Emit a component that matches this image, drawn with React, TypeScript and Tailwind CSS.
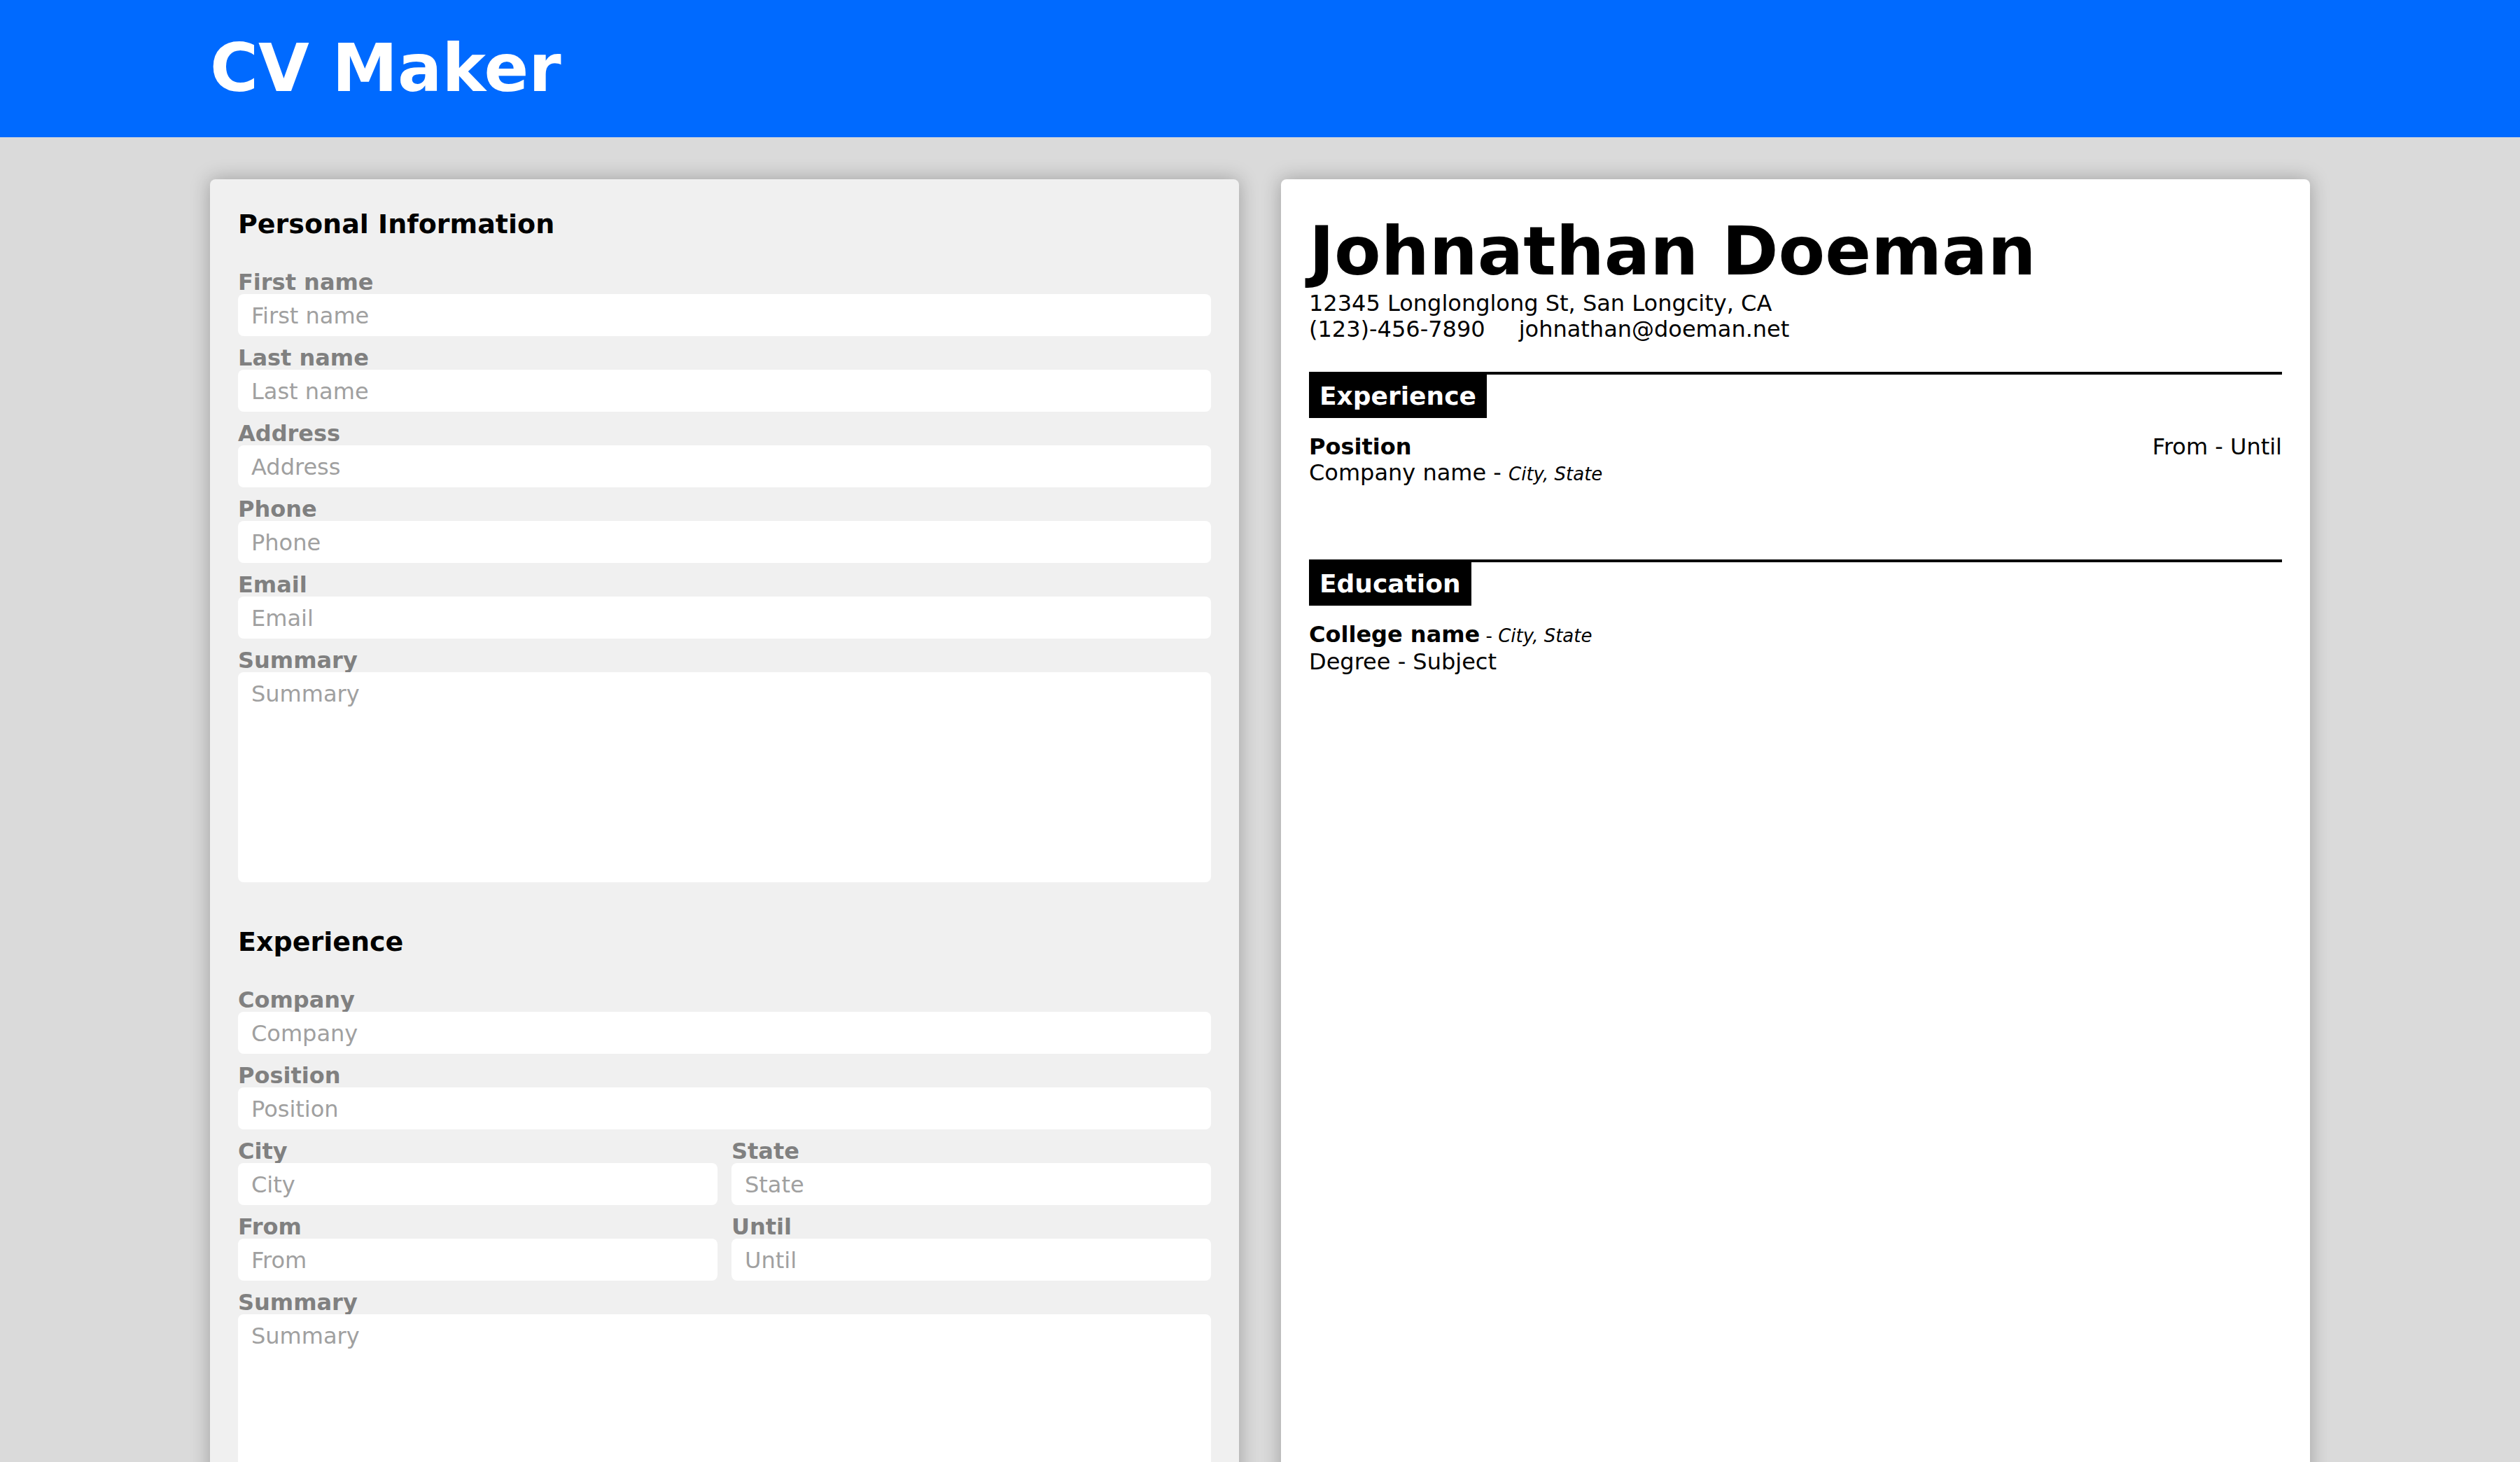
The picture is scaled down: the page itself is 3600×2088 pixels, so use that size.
import React from 'react';

type FieldProps = {
  label: string;
  textarea?: boolean;
};

const Field: React.FC<FieldProps> = ({ label, textarea }) => (
  <label className="flex flex-col">
    <span className="-mt-[2px] -mb-[2px] text-[32px] leading-[37px] font-bold text-[#808080]">{label}</span>
    {textarea ? (
      <textarea
        placeholder={label}
        className="h-[300px] resize-none rounded-lg bg-white px-[19px] pt-[13px] text-[32px] leading-[37px] text-black outline-none placeholder:text-[#a0a0a0]"
      />
    ) : (
      <input
        placeholder={label}
        className="h-[60px] rounded-lg bg-white px-[19px] pt-[2px] text-[32px] text-black outline-none placeholder:text-[#a0a0a0]"
      />
    )}
  </label>
);

const FormSection: React.FC<{ title: string; children: React.ReactNode }> = ({ title, children }) => (
  <section className="flex flex-col">
    <h2 className="mb-[44px] text-[38px] leading-[45px] font-bold text-black">{title}</h2>
    <div className="flex flex-col gap-[15px]">{children}</div>
  </section>
);

const CvHeading: React.FC<{ title: string }> = ({ title }) => (
  <div className="flex border-t-4 border-black">
    <div className="bg-black px-[15px] py-[10px] text-[36px] leading-[42px] font-bold text-white">{title}</div>
  </div>
);

const App: React.FC = () => {
  return (
    <div className="min-h-screen bg-[#dadada] font-['DejaVu_Sans',Verdana,sans-serif] text-black">
      {/* Header */}
      <header className="h-[196px] bg-[#006aff]">
        <div className="mx-auto flex h-full w-[3000px] items-center">
          <h1 className="text-[94px] leading-none font-bold text-white">CV Maker</h1>
        </div>
      </header>

      <main className="mx-auto grid w-[3000px] grid-cols-2 gap-[60px] pt-[60px] pb-[60px]">
        {/* Editor */}
        <div className="flex flex-col gap-[63px] rounded-lg bg-[#f0f0f0] px-[40px] pt-[42px] pb-[60px] shadow-[0_0_28px_rgba(0,0,0,0.28)]">
          <FormSection title="Personal Information">
            <Field label="First name" />
            <Field label="Last name" />
            <Field label="Address" />
            <Field label="Phone" />
            <Field label="Email" />
            <Field label="Summary" textarea />
          </FormSection>

          <FormSection title="Experience">
            <Field label="Company" />
            <Field label="Position" />
            <div className="grid grid-cols-2 gap-x-[20px]">
              <Field label="City" />
              <Field label="State" />
            </div>
            <div className="grid grid-cols-2 gap-x-[20px]">
              <Field label="From" />
              <Field label="Until" />
            </div>
            <Field label="Summary" textarea />
          </FormSection>

          <FormSection title="Education">
            <Field label="College" />
            <div className="grid grid-cols-2 gap-x-[20px]">
              <Field label="City" />
              <Field label="State" />
            </div>
            <Field label="Degree" />
            <Field label="Subject" />
          </FormSection>
        </div>

        {/* Preview */}
        <div className="rounded-lg bg-white px-[40px] pt-[46px] pb-[60px] shadow-[0_0_28px_rgba(0,0,0,0.28)]">
          <h1 className="text-[97px] leading-[113px] font-bold">Johnathan Doeman</h1>
          <div className="text-[32px] leading-[37px]">
            <p>12345 Longlonglong St, San Longcity, CA</p>
            <p>
              <span className="mr-[48px]">(123)-456-7890</span>
              <span>johnathan@doeman.net</span>
            </p>
          </div>

          <section className="mt-[42px]">
            <CvHeading title="Experience" />
            <div className="mt-[23px] text-[32px] leading-[37px]">
              <div className="flex justify-between">
                <span className="font-bold">Position</span>
                <span>From - Until</span>
              </div>
              <p>
                Company name - <i className="text-[26px]">City, State</i>
              </p>
            </div>
          </section>

          <section className="mt-[103px]">
            <CvHeading title="Education" />
            <div className="mt-[23px] text-[32px] leading-[37px]">
              <p>
                <span className="font-bold">College name</span>
                <span className="text-[26px]">
                  {' '}- <i>City, State</i>
                </span>
              </p>
              <p>Degree - Subject</p>
            </div>
          </section>
        </div>
      </main>
    </div>
  );
};

export default App;
